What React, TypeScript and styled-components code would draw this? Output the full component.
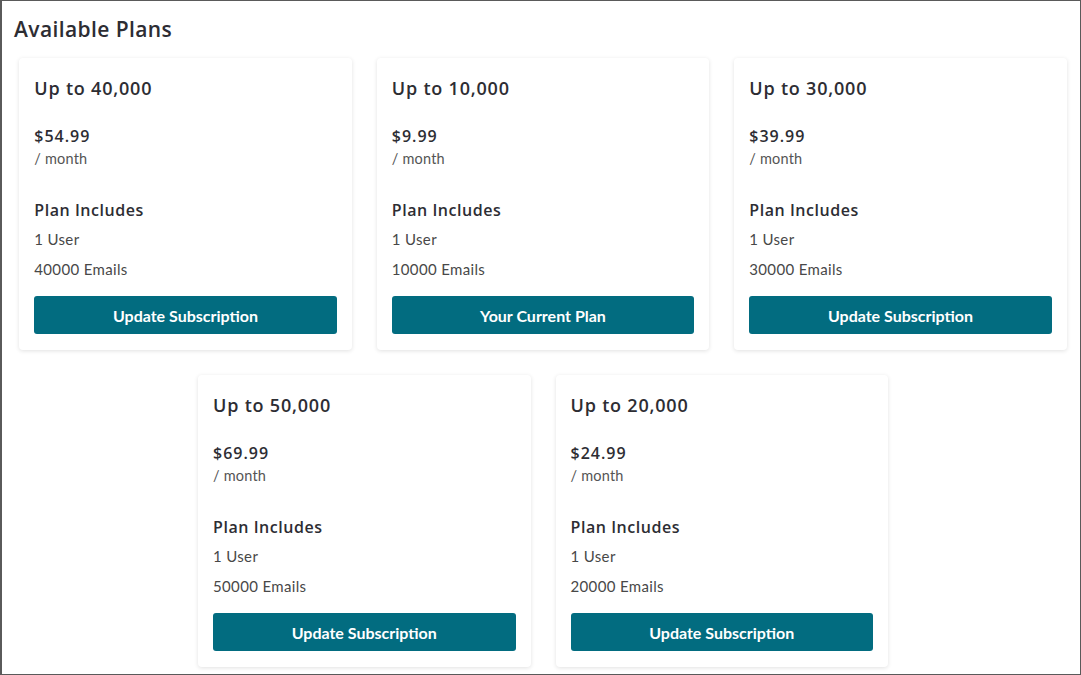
import styled, { createGlobalStyle } from "styled-components"

const GlobalStyle = createGlobalStyle`
    body {
        margin: 0;
        background: #fff;
        font-family: Lato, "Noto Sans", sans-serif;
    }
`

const Frame = styled.div`
    box-sizing: border-box;
    width: 1081px;
    height: 675px;
    border: 1px solid #5a5a5a;
    border-left-width: 2px;
    overflow: hidden;
`

const Title = styled.h2`
    margin: 15px 0 0 12px;
    font-family: "Open Sans", sans-serif;
    font-size: 21px;
    line-height: 26px;
    font-weight: 600;
    letter-spacing: 0.4px;
    color: #2d2d33;
`

const Grid = styled.div`
    width: 1048px;
    margin: 16px 0 0 17px;
    display: flex;
    flex-wrap: wrap;
    justify-content: center;
    gap: 25px;
`

const Card = styled.div`
    box-sizing: border-box;
    width: 332.5px;
    padding: 18px 15px 16px;
    background: #fff;
    border-radius: 4px;
    box-shadow: 0 1px 4px rgba(0, 0, 0, 0.12);
    color: #2d2d33;
`

const Heading = styled.div<{ $spacing: number }>`
    font-family: "Open Sans", sans-serif;
    font-weight: 600;
    letter-spacing: ${p => p.$spacing}px;
`

const PlanName = styled(Heading)`
    font-size: 18px;
    line-height: 24px;
`

const Price = styled(Heading)`
    margin-top: 26px;
    font-size: 16px;
    line-height: 20px;
`

const Period = styled.div`
    margin-top: 3px;
    font-size: 14.5px;
    line-height: 20px;
    letter-spacing: 0.2px;
    color: #555;
`

const IncludesHead = styled(Heading)`
    margin-top: 31px;
    font-size: 16px;
    line-height: 20px;
`

const Feature = styled.div`
    margin-top: 9px;
    font-size: 15px;
    line-height: 20px;
    letter-spacing: 0.35px;
    color: #484848;
    & + & {
        margin-top: 10px;
    }
`

const Button = styled.button`
    display: block;
    width: 100%;
    height: 38px;
    margin-top: 17px;
    border: none;
    border-radius: 3px;
    background: #026c80;
    color: #fff;
    font-family: Lato, "Noto Sans", sans-serif;
    font-size: 16px;
    font-weight: 700;
    cursor: pointer;
`

const plans = [
    { name: "Up to 40,000", price: "$54.99", emails: 40000 },
    { name: "Up to 10,000", price: "$9.99", emails: 10000, current: true },
    { name: "Up to 30,000", price: "$39.99", emails: 30000 },
    { name: "Up to 50,000", price: "$69.99", emails: 50000 },
    { name: "Up to 20,000", price: "$24.99", emails: 20000 },
]

export default function App() {
    return <Frame>
        <GlobalStyle />
        <Title>Available Plans</Title>
        <Grid>
            {
                plans.map(p =>
                    <Card key={p.name}>
                        <PlanName $spacing={0.8}>{p.name}</PlanName>
                        <Price $spacing={1}>{p.price}</Price>
                        <Period>/ month</Period>
                        <IncludesHead $spacing={0.55}>Plan Includes</IncludesHead>
                        <Feature>1 User</Feature>
                        <Feature>{p.emails} Emails</Feature>
                        <Button>{p.current ? "Your Current Plan" : "Update Subscription"}</Button>
                    </Card>
                )
            }
        </Grid>
    </Frame>
}
